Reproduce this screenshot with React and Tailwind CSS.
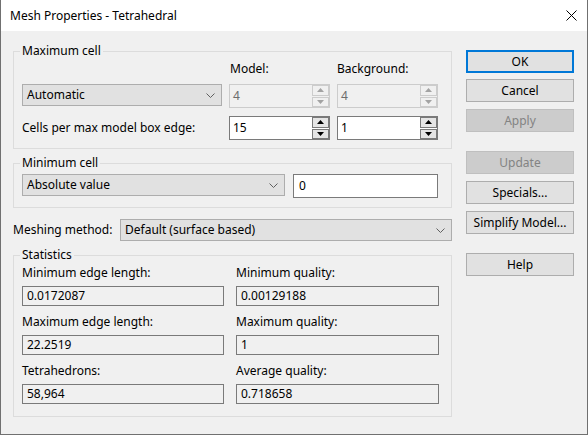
import React from "react";

const font = { fontFamily: '"Noto Sans", "Liberation Sans", sans-serif' };

function Chevron() {
  return (
    <svg width="9" height="5" viewBox="0 0 9 5" className="shrink-0">
      <path d="M0.5 0.5 L4.5 4.5 L8.5 0.5" fill="none" stroke="#606060" strokeWidth="1" />
    </svg>
  );
}

function Combo({ value, className }) {
  return (
    <div
      className={
        "flex items-center justify-between h-[22px] border border-[#adadad] bg-[#e1e1e1] pl-[4px] pr-[6px] " +
        className
      }
    >
      <span className="leading-none">{value}</span>
      <Chevron />
    </div>
  );
}

function SpinArrow({ up, disabled }) {
  return (
    <svg width="7" height="4" viewBox="0 0 7 4">
      <path
        d={up ? "M0 4 L3.5 0 L7 4 Z" : "M0 0 L3.5 4 L7 0 Z"}
        fill={disabled ? "#a3a3a3" : "#000000"}
      />
    </svg>
  );
}

function Spin({ value, disabled }) {
  return (
    <div
      className={
        "flex h-[24px] border " +
        (disabled ? "border-[#cccccc] bg-[#f0f0f0] text-[#6d6d6d]" : "border-[#7a7a7a] bg-white text-black")
      }
    >
      <div className="flex-1 flex items-center pl-[3px]">{value}</div>
      <div className="flex flex-col w-[17px] gap-[1px] py-[0px] pr-[0px]">
        <div
          className={
            "flex-1 flex items-center justify-center border " +
            (disabled ? "border-[#cccccc] bg-[#f0f0f0]" : "border-[#7a7a7a] bg-[#e5e5e5]")
          }
        >
          <SpinArrow up disabled={disabled} />
        </div>
        <div
          className={
            "flex-1 flex items-center justify-center border " +
            (disabled ? "border-[#cccccc] bg-[#f0f0f0]" : "border-[#7a7a7a] bg-[#e5e5e5]")
          }
        >
          <SpinArrow disabled={disabled} />
        </div>
      </div>
    </div>
  );
}

function Button({ label, primary, disabled, className = "" }) {
  let cls = "border-[#adadad] bg-[#e1e1e1] text-black";
  if (primary) cls = "border-2 border-[#0078d7] bg-[#e1e1e1] text-black";
  if (disabled) cls = "border-[#bfbfbf] bg-[#cccccc] text-[#838383]";
  return (
    <div className={"flex items-center justify-center h-[23px] border " + cls + " " + className}>
      {label}
    </div>
  );
}

function StatBox({ label, value }) {
  return (
    <div className="flex flex-col">
      <div className="h-[16px] leading-[16px]">{label}</div>
      <div className="mt-[5px] h-[20px] border border-[#7a7a7a] bg-[#f0f0f0] flex items-center pl-[4px]">
        {value}
      </div>
    </div>
  );
}

export default function App() {
  return (
    <div
      style={font}
      className="w-[588px] h-[435px] bg-[#f0f0f0] border-x border-b border-[#707070] text-[12px] text-black flex flex-col"
    >
      {/* title bar */}
      <div className="h-[31px] bg-white flex items-center justify-between pl-[9px] pr-[10px] shrink-0">
        <span className="text-[12px]">Mesh Properties - Tetrahedral</span>
        <svg width="11" height="11" viewBox="0 0 11 11">
          <path d="M0.5 0.5 L10.5 10.5 M10.5 0.5 L0.5 10.5" stroke="#000" strokeWidth="1" />
        </svg>
      </div>

      <div className="flex pl-[12px]">
        {/* left column */}
        <div className="w-[439px] flex flex-col pt-[12px]">
          <fieldset className="border border-[#dcdcdc] px-[8px] pb-[8px]">
            <legend className="px-[2px] -ml-[2px] leading-[16px]">Maximum cell</legend>
            <div className="grid grid-cols-[200px_101px_101px] gap-x-[7px] mt-[2px]">
              <div />
              <div className="h-[16px] leading-[16px] pl-[1px]">Model:</div>
              <div className="h-[16px] leading-[16px]">Background:</div>
            </div>
            <div className="grid grid-cols-[200px_101px_101px] gap-x-[7px] mt-[7px] items-start">
              <Combo value="Automatic" />
              <Spin value="4" disabled />
              <Spin value="4" disabled />
            </div>
            <div className="grid grid-cols-[200px_101px_101px] gap-x-[7px] mt-[8px] items-center">
              <div>Cells per max model box edge:</div>
              <Spin value="15" />
              <Spin value="1" />
            </div>
          </fieldset>

          <fieldset className="border border-[#dcdcdc] px-[8px] pb-[9px] mt-[6px]">
            <legend className="px-[2px] -ml-[2px] leading-[16px]">Minimum cell</legend>
            <div className="flex gap-[8px] mt-[3px] items-start">
              <Combo value="Absolute value" className="w-[263px]" />
              <div className="w-[145px] h-[24px] border border-[#7a7a7a] bg-white flex items-center pl-[5px]">
                0
              </div>
            </div>
          </fieldset>

          <div className="flex items-center mt-[11px]">
            <div className="w-[107px]">Meshing method:</div>
            <Combo value="Default (surface based)" className="w-[332px]" />
          </div>

          <fieldset className="border border-[#dcdcdc] px-[8px] pb-[12px] mt-[6px]">
            <legend className="px-[2px] -ml-[2px] leading-[16px]">Statistics</legend>
            <div className="grid grid-cols-[202px_203px] gap-x-[12px] gap-y-[8px] mt-[2px]">
              <StatBox label="Minimum edge length:" value="0.0172087" />
              <StatBox label="Minimum quality:" value="0.00129188" />
              <StatBox label="Maximum edge length:" value="22.2519" />
              <StatBox label="Maximum quality:" value="1" />
              <StatBox label="Tetrahedrons:" value="58,964" />
              <StatBox label="Average quality:" value="0.718658" />
            </div>
          </fieldset>
        </div>

        {/* right column buttons */}
        <div className="w-[108px] ml-[14px] flex flex-col pt-[19px]">
          <Button label="OK" primary />
          <Button label="Cancel" className="mt-[6px]" />
          <Button label="Apply" disabled className="mt-[7px]" />
          <Button label="Update" disabled className="mt-[19px]" />
          <Button label="Specials..." className="mt-[7px]" />
          <Button label="Simplify Model..." className="mt-[7px]" />
          <Button label="Help" className="mt-[19px]" />
        </div>
      </div>
    </div>
  );
}
